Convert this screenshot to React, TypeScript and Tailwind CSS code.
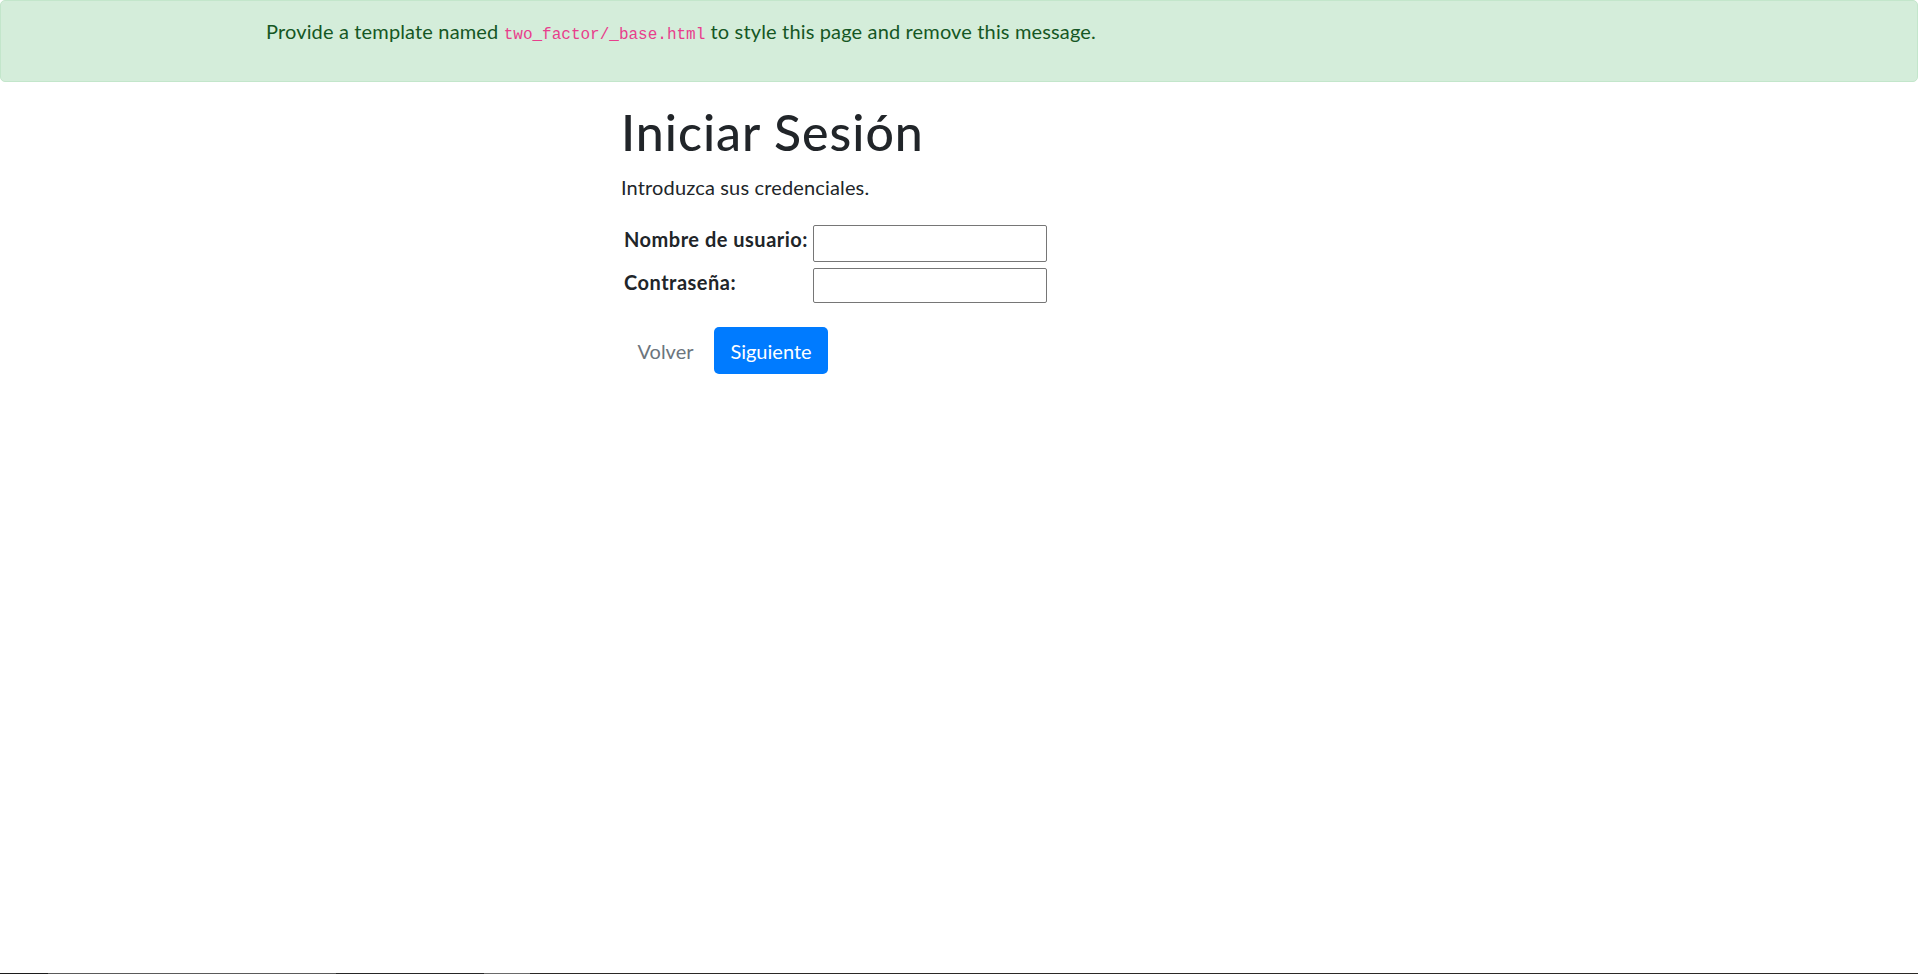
export default function App() {
  return (
    <div className="flex min-h-[974px] flex-col bg-white font-['Lato',sans-serif] text-[20px] leading-[30px] text-[#212529]">
      {/* aviso de plantilla */}
      <div className="h-[82px] w-full rounded-[5px] border border-[#c3e6cb] bg-[#d4edda] pl-[265px] pt-[15px] tracking-[0.15px] text-[#155724]">
        <p>
          Provide a template named{" "}
          <code className="font-['Liberation_Mono',monospace] text-[16px] tracking-normal text-[#e83e8c]">two_factor/_base.html</code>{" "}
          to style this page and remove this message.
        </p>
      </div>

      <main className="mx-auto mt-[20px] w-[676px] flex-1">
        <h1 className="mb-[10px] text-[50px] font-medium leading-[60px] tracking-[1px]">Iniciar Sesión</h1>
        <p className="mb-[20px] tracking-[0.15px]">Introduzca sus credenciales.</p>

        <form className="flex flex-col">
          <div className="flex h-[45px] items-start pt-[2px]">
            <label htmlFor="username" className="w-[192px] pl-[3px] font-bold tracking-[0.5px]">
              Nombre de usuario:
            </label>
            <input id="username" type="text" className="mt-[1px] h-[37px] w-[234px] rounded-[2px] border border-[#767676] px-[3px]" />
          </div>
          <div className="flex h-[42px] items-start">
            <label htmlFor="password" className="w-[192px] pl-[3px] font-bold tracking-[0.5px]">
              Contraseña:
            </label>
            <input id="password" type="password" className="mt-[1px] h-[35px] w-[234px] rounded-[2px] border border-[#767676] px-[3px]" />
          </div>

          <div className="mt-[18px] flex gap-[5px] pl-[1px]">
            <button type="button" className="h-[47px] w-[87px] rounded-[5px] text-[#6c757d]">
              Volver
            </button>
            <button type="submit" className="h-[47px] w-[114px] rounded-[5px] bg-[#007bff] text-white">
              Siguiente
            </button>
          </div>
        </form>
      </main>

      {/* borde inferior de la captura */}
      <div className="flex h-px w-full">
        <div className="w-[48px] bg-[#1c1c1c]" />
        <div className="w-[288px] bg-[#5a5a5a]" />
        <div className="w-[148px] bg-[#262626]" />
        <div className="w-[46px] bg-[#6a6a6a]" />
        <div className="flex-1 bg-[#2b2926]" />
      </div>
    </div>
  );
}
